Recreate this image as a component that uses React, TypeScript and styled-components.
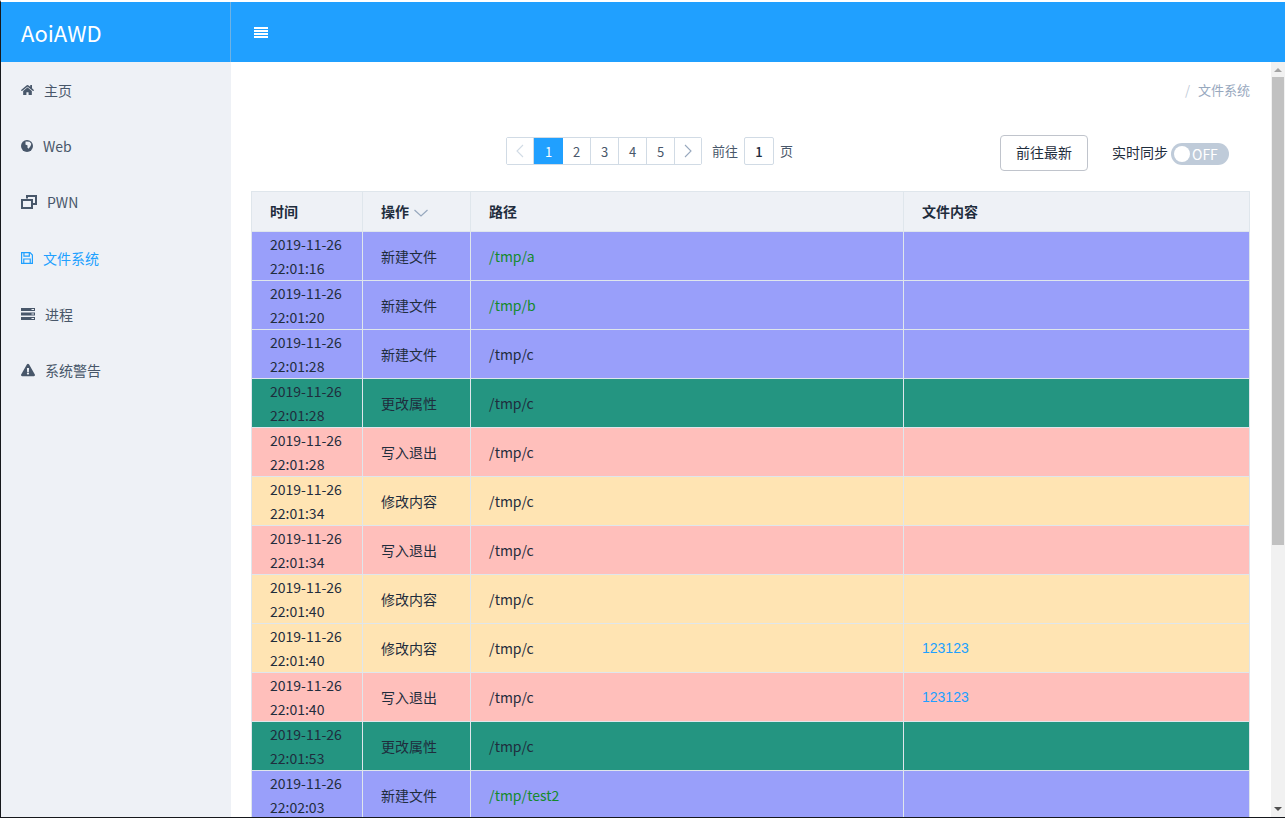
import React from "react";
import styled, { createGlobalStyle } from "styled-components";
import { FaHome, FaExclamationTriangle } from "react-icons/fa";

const Global = createGlobalStyle`
  html, body {
    margin: 0;
    padding: 0;
    height: 818px;
    overflow: hidden;
    background: #fff;
  }
  * {
    box-sizing: border-box;
  }
  body {
    font-family: "Noto Sans CJK SC", "Noto Sans", sans-serif;
    font-size: 14px;
    color: #1f2d3d;
  }
`;

type Kind = "create" | "attr" | "close" | "modify";

type Row = {
  date: string;
  time: string;
  op: string;
  kind: Kind;
  path: string;
  fresh?: boolean;
  content?: string;
};

const rowColors: Record<Kind, string> = {
  create: "#999ffa",
  attr: "#249581",
  close: "#ffbfbb",
  modify: "#ffe4b3",
};

const rows: Row[] = [
  { date: "2019-11-26", time: "22:01:16", op: "新建文件", kind: "create", path: "/tmp/a", fresh: true },
  { date: "2019-11-26", time: "22:01:20", op: "新建文件", kind: "create", path: "/tmp/b", fresh: true },
  { date: "2019-11-26", time: "22:01:28", op: "新建文件", kind: "create", path: "/tmp/c" },
  { date: "2019-11-26", time: "22:01:28", op: "更改属性", kind: "attr", path: "/tmp/c" },
  { date: "2019-11-26", time: "22:01:28", op: "写入退出", kind: "close", path: "/tmp/c" },
  { date: "2019-11-26", time: "22:01:34", op: "修改内容", kind: "modify", path: "/tmp/c" },
  { date: "2019-11-26", time: "22:01:34", op: "写入退出", kind: "close", path: "/tmp/c" },
  { date: "2019-11-26", time: "22:01:40", op: "修改内容", kind: "modify", path: "/tmp/c" },
  { date: "2019-11-26", time: "22:01:40", op: "修改内容", kind: "modify", path: "/tmp/c", content: "123123" },
  { date: "2019-11-26", time: "22:01:40", op: "写入退出", kind: "close", path: "/tmp/c", content: "123123" },
  { date: "2019-11-26", time: "22:01:53", op: "更改属性", kind: "attr", path: "/tmp/c" },
  { date: "2019-11-26", time: "22:02:03", op: "新建文件", kind: "create", path: "/tmp/test2", fresh: true },
];

// the font-awesome 4 shapes the page uses, redrawn where the packaged ones differ
const GlobeIcon = () => (
  <svg viewBox="0 0 12 12">
    <circle cx="6" cy="6" r="6" fill="currentColor" />
    <path d="M4.6 1.6 L8.6 1.7 L10.3 3.8 L9.6 6 L7.6 8.8 L6.4 7.4 L6.6 5.6 L4.4 4.6 Z" fill="#eef1f6" />
  </svg>
);

const WindowsIcon = () => (
  <svg viewBox="0 0 16 14" fill="none" stroke="currentColor" strokeWidth="2">
    <path d="M6 3.5 V1 H15 V9 H11.5" />
    <rect x="1" y="5" width="10" height="8" />
  </svg>
);

const SaveIcon = () => (
  <svg viewBox="0 0 13 13" fill="none" stroke="currentColor" strokeWidth="1.3">
    <path d="M0.65 0.65 H9.8 L12.35 3.2 V12.35 H0.65 Z" />
    <path d="M3.2 0.65 V4.4 H9 V0.65" />
    <path d="M3 12.35 V7.6 H10 V12.35" />
  </svg>
);

const ServerIcon = () => (
  <svg viewBox="0 0 14 12">
    {[0, 4.5, 9].map((y) => (
      <g key={y}>
        <rect y={y} width="14" height="3" fill="currentColor" />
        <rect x="10.5" y={y + 1} width="2.5" height="1" fill="#eef1f6" />
      </g>
    ))}
  </svg>
);

const menu = [
  { label: "主页", icon: <FaHome />, width: 13 },
  { label: "Web", icon: <GlobeIcon />, width: 12 },
  { label: "PWN", icon: <WindowsIcon />, width: 16 },
  { label: "文件系统", icon: <SaveIcon />, width: 12, active: true },
  { label: "进程", icon: <ServerIcon />, width: 14 },
  { label: "系统警告", icon: <FaExclamationTriangle />, width: 14 },
];

const Chevron = ({ dir }: { dir: "left" | "right" }) => (
  <svg width="8" height="14" viewBox="0 0 8 14" fill="none" stroke="currentColor" strokeWidth="1.1">
    <path d={dir === "left" ? "M7 1 L1 7 L7 13" : "M1 1 L7 7 L1 13"} />
  </svg>
);

export default function App() {
  return (
    <Frame>
      <Global />
      <TopBar>
        <Logo>AoiAWD</Logo>
        <MenuToggle>
          <svg width="14" height="11" viewBox="0 0 14 11" fill="currentColor">
            <rect y="0" width="14" height="2" />
            <rect y="3" width="14" height="2" />
            <rect y="6" width="14" height="2" />
            <rect y="9" width="14" height="2" />
          </svg>
        </MenuToggle>
      </TopBar>
      <Body>
        <Sidebar>
          {menu.map((m) => (
            <MenuItem key={m.label} $active={m.active}>
              <MenuIcon $width={m.width}>{m.icon}</MenuIcon>
              {m.label}
            </MenuItem>
          ))}
        </Sidebar>
        <Main>
          <Breadcrumb>
            <span>/</span>文件系统
          </Breadcrumb>
          <Toolbar>
            <Pagination>
              <PageList>
                <PageButton $muted>
                  <Chevron dir="left" />
                </PageButton>
                {[1, 2, 3, 4, 5].map((n) => (
                  <PageButton key={n} $active={n === 1}>
                    {n}
                  </PageButton>
                ))}
                <PageButton $arrow>
                  <Chevron dir="right" />
                </PageButton>
              </PageList>
              <JumpLabel>前往</JumpLabel>
              <JumpInput>1</JumpInput>
              <JumpLabel>页</JumpLabel>
            </Pagination>
            <Actions>
              <LatestButton>前往最新</LatestButton>
              <SyncLabel>实时同步</SyncLabel>
              <Switch>
                <SwitchKnob />
                OFF
              </Switch>
            </Actions>
          </Toolbar>
          <Table>
            <colgroup>
              <col style={{ width: 111 }} />
              <col style={{ width: 108 }} />
              <col style={{ width: 433 }} />
              <col />
            </colgroup>
            <thead>
              <tr>
                <HeadCell>时间</HeadCell>
                <HeadCell>
                  操作
                  <SortCaret width="14" height="8" viewBox="0 0 14 8" fill="none" stroke="currentColor" strokeWidth="1.2">
                    <path d="M0.5 1 L7 7 L13.5 1" />
                  </SortCaret>
                </HeadCell>
                <HeadCell>路径</HeadCell>
                <HeadCell>文件内容</HeadCell>
              </tr>
            </thead>
            <tbody>
              {rows.map((r, i) => (
                <DataRow key={i} $kind={r.kind}>
                  <Cell>
                    {r.date} {r.time}
                  </Cell>
                  <Cell>{r.op}</Cell>
                  <Cell $fresh={r.fresh}>{r.path}</Cell>
                  <Cell>{r.content && <Content>{r.content}</Content>}</Cell>
                </DataRow>
              ))}
            </tbody>
          </Table>
        </Main>
        <ScrollRail>
          <ScrollUp />
          <ScrollThumb />
          <ScrollDown />
        </ScrollRail>
      </Body>
    </Frame>
  );
}

const Frame = styled.div`
  position: relative;
  height: 818px;
  display: flex;
  flex-direction: column;
  overflow: hidden;
  border-top: 2px solid #fff;
  border-left: 1px solid #16181c;
  border-bottom: 1px solid #16181c;
  &::before {
    content: "";
    position: absolute;
    left: -1px;
    top: 535px;
    width: 1px;
    height: 218px;
    background: repeating-linear-gradient(
      to bottom,
      #2f7fb5 0 2px,
      transparent 2px 6px,
      #2f7fb5 6px 8px,
      transparent 8px 16px
    );
  }
`;

const TopBar = styled.header`
  flex: none;
  height: 60px;
  display: flex;
  align-items: center;
  background: #20a0ff;
  color: #fff;
`;

const Logo = styled.div`
  width: 230px;
  height: 100%;
  padding-left: 20px;
  display: flex;
  align-items: center;
  font-size: 22px;
  border-right: 1px solid #6fb2e3;
`;

const MenuToggle = styled.div`
  margin-left: 23px;
  display: flex;
`;

const Body = styled.div`
  flex: 1;
  min-height: 0;
  display: flex;
`;

const Sidebar = styled.nav`
  flex: none;
  width: 230px;
  background: #eef1f6;
`;

const MenuItem = styled.div<{ $active?: boolean }>`
  height: 56px;
  padding-left: 20px;
  display: flex;
  align-items: center;
  color: ${(p) => (p.$active ? "#20a0ff" : "#48576a")};
`;

const MenuIcon = styled.span<{ $width: number }>`
  display: flex;
  align-items: center;
  width: ${(p) => p.$width}px;
  margin-right: 10px;
  svg {
    display: block;
    width: ${(p) => p.$width}px;
    height: 14px;
  }
`;

const Main = styled.main`
  flex: 1;
  min-width: 0;
  padding: 0 21px 0 20px;
  overflow: hidden;
  background: #fff;
`;

const Breadcrumb = styled.div`
  height: 55px;
  padding-top: 17px;
  text-align: right;
  font-size: 13px;
  line-height: 21px;
  color: #97a8be;
  span {
    margin-right: 8px;
    color: #bfcbd9;
  }
`;

const Toolbar = styled.div`
  height: 36px;
  margin: 18px 0 20px;
  padding: 0 21px 0 255px;
  display: flex;
  align-items: center;
`;

const Pagination = styled.div`
  display: flex;
  align-items: center;
  margin-top: -4px;
  font-size: 13px;
  color: #48576a;
`;

const PageList = styled.div`
  display: flex;
  border: 1px solid #d1dbe5;
  border-radius: 2px;
  margin-right: 10px;
`;

const PageButton = styled.div<{ $active?: boolean; $muted?: boolean; $arrow?: boolean }>`
  width: ${(p) => (p.$active ? 29 : 28)}px;
  height: 26px;
  display: flex;
  align-items: center;
  justify-content: center;
  border-right: ${(p) => (p.$active ? "0" : "1px solid #d1dbe5")};
  background: ${(p) => (p.$active ? "#20a0ff" : "#fff")};
  color: ${(p) => (p.$active ? "#fff" : p.$muted ? "#d1dbe5" : p.$arrow ? "#97a8be" : "#48576a")};
  &:first-child {
    width: 27px;
  }
  &:last-child {
    width: 26px;
    border-right: 0;
  }
`;

const JumpLabel = styled.span`
  line-height: 28px;
`;

const JumpInput = styled.div`
  width: 30px;
  height: 28px;
  margin: 0 6px;
  display: flex;
  align-items: center;
  justify-content: center;
  border: 1px solid #d1dbe5;
  border-radius: 2px;
  font-weight: 500;
  color: #1f2d3d;
`;

const Actions = styled.div`
  margin-left: auto;
  display: flex;
  align-items: center;
`;

const LatestButton = styled.div`
  width: 88px;
  height: 36px;
  margin-right: 24px;
  padding-bottom: 2px;
  display: flex;
  align-items: center;
  justify-content: center;
  border: 1px solid #c0c4cc;
  border-radius: 4px;
`;

const SyncLabel = styled.span`
  margin: 0 3px 2px 0;
`;

const Switch = styled.div`
  position: relative;
  width: 58px;
  height: 22px;
  padding-left: 21px;
  margin-top: 2px;
  border-radius: 11px;
  background: #bfcbd9;
  color: #fff;
  line-height: 22px;
`;

const SwitchKnob = styled.span`
  position: absolute;
  left: 3px;
  top: 3px;
  width: 16px;
  height: 16px;
  border-radius: 50%;
  background: #fff;
`;

const Table = styled.table`
  width: 999px;
  table-layout: fixed;
  border-collapse: collapse;
  border: 1px solid #dfe6ec;
`;

const HeadCell = styled.th`
  height: 40px;
  padding: 0 18px 2px;
  text-align: left;
  font-weight: 700;
  background: #eef1f6;
  border: 1px solid #dfe6ec;
`;

const SortCaret = styled.svg`
  margin-left: 5px;
  color: #97a8be;
`;

const DataRow = styled.tr<{ $kind: Kind }>`
  background: ${(p) => rowColors[p.$kind]};
`;

const Cell = styled.td<{ $fresh?: boolean }>`
  height: 49px;
  padding: 0 18px;
  line-height: 24px;
  border: 1px solid #dfe6ec;
  vertical-align: middle;
  color: ${(p) => (p.$fresh ? "#148a2c" : "#1f2d3d")};
`;

const Content = styled.span`
  display: block;
  margin-bottom: 1px;
  font-family: "Liberation Sans", Arial, sans-serif;
  color: #20a0ff;
`;

const ScrollRail = styled.div`
  flex: none;
  width: 14px;
  display: flex;
  flex-direction: column;
  background: #f1f1f1;
`;

const ScrollUp = styled.div`
  flex: none;
  height: 15px;
  display: flex;
  align-items: center;
  justify-content: center;
  &::before {
    content: "";
    border: 4px solid transparent;
    border-top: 0;
    border-bottom: 4px solid #a3a3a3;
  }
`;

const ScrollThumb = styled.div`
  flex: none;
  height: 468px;
  margin: 0 1px;
  background: #c1c1c1;
`;

const ScrollDown = styled.div`
  flex: 1;
  display: flex;
  align-items: flex-end;
  justify-content: center;
  padding-bottom: 6px;
  &::before {
    content: "";
    border: 4px solid transparent;
    border-bottom: 0;
    border-top: 4px solid #505050;
  }
`;
